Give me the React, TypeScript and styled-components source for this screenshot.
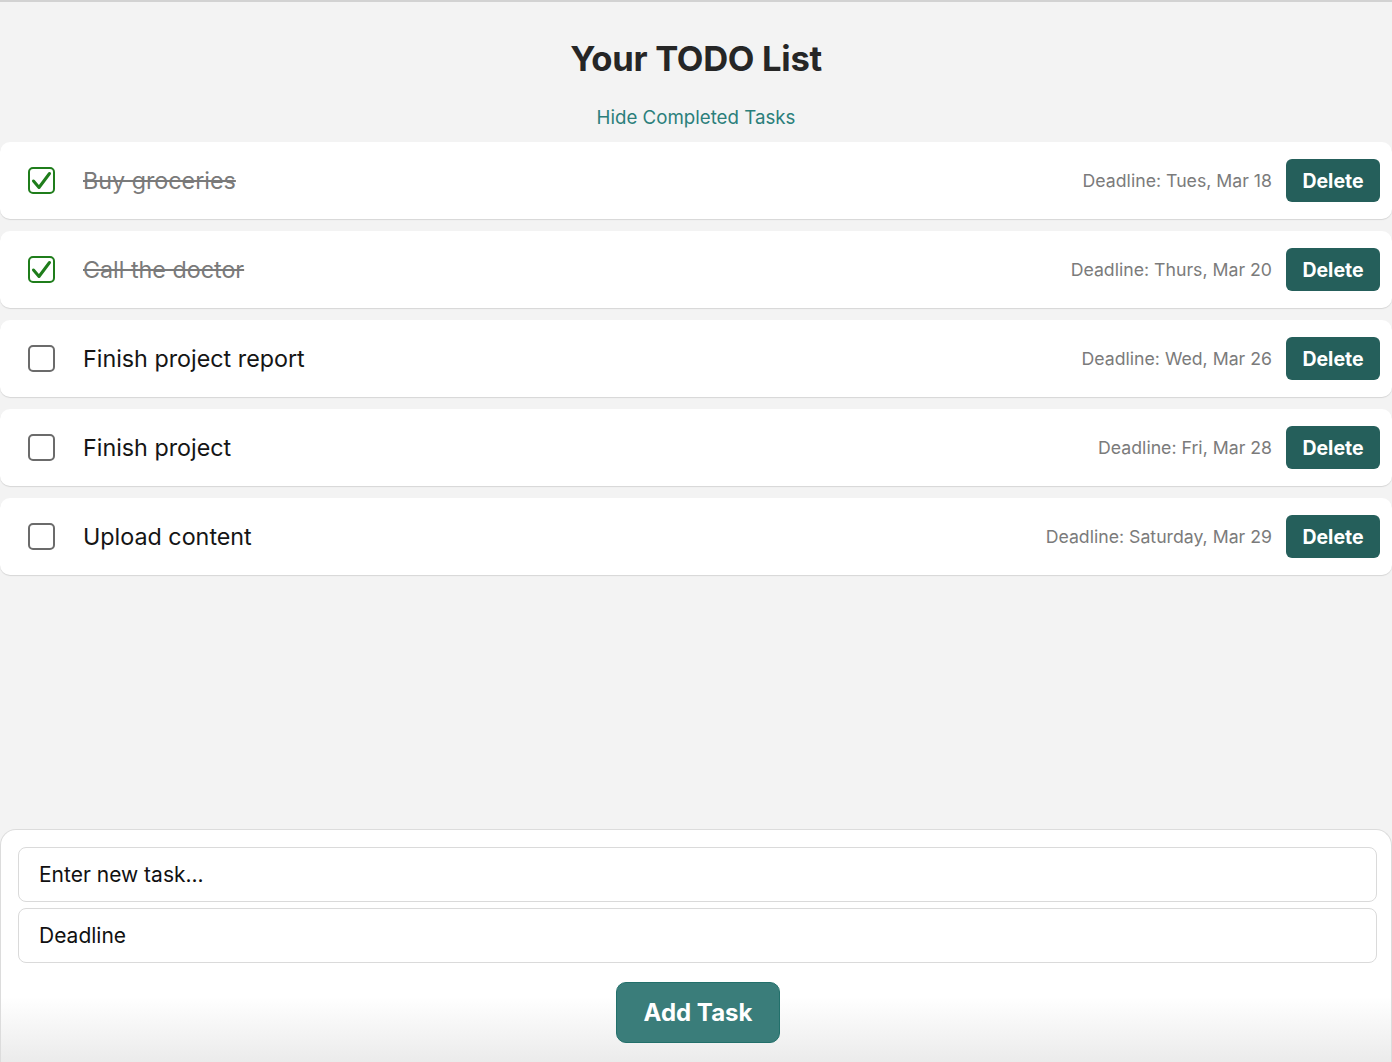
import React, { useState } from "react";
import styled, { createGlobalStyle } from "styled-components";

const Global = createGlobalStyle`
  html, body { margin: 0; padding: 0; background: #f3f3f3; }
  body { font-family: Inter, "Noto Sans", Arial, sans-serif; }
  * { box-sizing: border-box; }
`;

const Page = styled.div`
  min-height: 1062px;
  display: flex;
  flex-direction: column;
  border-top: 2px solid #d2d2d2;
  background: #f3f3f3;
  overflow: hidden;
`;

const Title = styled.h1`
  margin: 34px 0 0;
  text-align: center;
  font-size: 34.6px;
  font-weight: 700;
  color: #262626;
  letter-spacing: -0.3px;
  line-height: 44px;
`;

const ToggleLink = styled.button`
  align-self: center;
  margin-top: 26px;
  border: none;
  background: none;
  padding: 0;
  font-family: inherit;
  font-size: 18.7px;
  color: #2b7f7b;
  line-height: 24px;
  cursor: pointer;
`;

const List = styled.div`
  margin-top: 12px;
  display: flex;
  flex-direction: column;
  gap: 12px;
`;

const Row = styled.div`
  height: 77px;
  background: #fff;
  border-radius: 10px;
  box-shadow: 0 1px 1px rgba(0, 0, 0, 0.12);
  display: flex;
  align-items: center;
  padding: 0 12px 0 28px;
`;

const Box = styled.span<{ $checked: boolean }>`
  width: 27px;
  height: 27px;
  border-radius: 5px;
  border: 2px solid ${(p) => (p.$checked ? "#1f7d1b" : "#6b6b6b")};
  display: flex;
  align-items: center;
  justify-content: center;
  flex-shrink: 0;
`;

const TaskText = styled.span<{ $done: boolean }>`
  margin-left: 28px;
  font-size: 23.3px;
  color: ${(p) => (p.$done ? "#7a7a7a" : "#151515")};
  text-decoration: ${(p) => (p.$done ? "line-through" : "none")};
  text-decoration-thickness: 2px;
  flex: 1;
`;

const Deadline = styled.span`
  font-size: 17.7px;
  color: #7b7b7b;
  margin-right: 14px;
`;

const DeleteButton = styled.button`
  width: 94px;
  height: 43px;
  border: none;
  border-radius: 6px;
  background: #255f5b;
  color: #fff;
  font-family: inherit;
  font-size: 19.5px;
  font-weight: 700;
  cursor: pointer;
`;

const Panel = styled.div`
  margin-top: auto;
  height: 233px;
  background: linear-gradient(to bottom, #ffffff 0%, #ffffff 72%, #ebebeb 100%);
  border: 1px solid #dcdcdc;
  border-bottom: none;
  border-radius: 16px 16px 0 0;
  padding: 17px 14px 0 17px;
  display: flex;
  flex-direction: column;
  gap: 6px;
`;

const Input = styled.input`
  height: 55px;
  width: 100%;
  border: 1px solid #dadada;
  border-radius: 8px;
  padding: 0 20px;
  font-family: inherit;
  font-size: 21px;
  color: #111;
  background: #fff;
  outline: none;
  &::placeholder { color: #111; }
`;

const AddButton = styled.button`
  align-self: center;
  margin-top: 13px;
  margin-left: 1px;
  width: 164px;
  height: 61px;
  border: 1px solid #22706b;
  border-radius: 10px;
  background: #3a7d7a;
  color: #fff;
  font-family: inherit;
  font-size: 24px;
  font-weight: 700;
  cursor: pointer;
`;

const Check = () => (
  <svg width="21" height="19" viewBox="0 0 21 19" fill="none">
    <path d="M2.5 10 L8 16.5 L18.5 2.5" stroke="#1f7d1b" strokeWidth="3" strokeLinecap="round" strokeLinejoin="round" />
  </svg>
);

type Task = { text: string; deadline: string; done: boolean };

const initial: Task[] = [
  { text: "Buy groceries", deadline: "Tues, Mar 18", done: true },
  { text: "Call the doctor", deadline: "Thurs, Mar 20", done: true },
  { text: "Finish project report", deadline: "Wed, Mar 26", done: false },
  { text: "Finish project", deadline: "Fri, Mar 28", done: false },
  { text: "Upload content", deadline: "Saturday, Mar 29", done: false },
];

export default function App() {
  const [tasks] = useState(initial);
  return (
    <>
      <Global />
      <Page>
        <Title>Your TODO List</Title>
        <ToggleLink>Hide Completed Tasks</ToggleLink>
        <List>
          {tasks.map((t) => (
            <Row key={t.text}>
              <Box $checked={t.done}>{t.done && <Check />}</Box>
              <TaskText $done={t.done}>{t.text}</TaskText>
              <Deadline>Deadline: {t.deadline}</Deadline>
              <DeleteButton>Delete</DeleteButton>
            </Row>
          ))}
        </List>
        <Panel>
          <Input placeholder="Enter new task..." />
          <Input placeholder="Deadline" />
          <AddButton>Add Task</AddButton>
        </Panel>
      </Page>
    </>
  );
}
